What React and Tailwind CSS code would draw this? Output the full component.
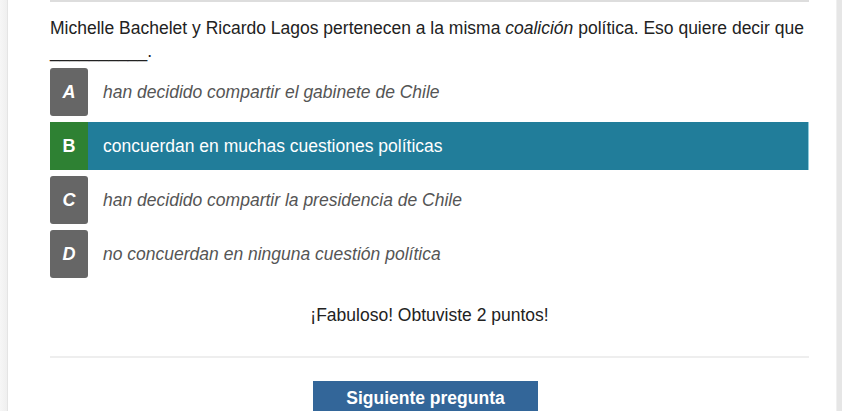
import React from "react"

const options = [
  { letter: "A", text: "han decidido compartir el gabinete de Chile" },
  { letter: "B", text: "concuerdan en muchas cuestiones políticas", selected: true },
  { letter: "C", text: "han decidido compartir la presidencia de Chile" },
  { letter: "D", text: "no concuerdan en ninguna cuestión política" },
]

const Option = ({ letter, text, selected }) => {
  if (selected) {
    return (
      <div className="flex h-[48px] items-center bg-[#217d9a] border-r border-[#8fcbdc]">
        <div className="flex h-full w-[38px] items-center justify-center bg-[#2e8133] text-[18px] font-bold text-white">
          {letter}
        </div>
        <div className="pl-[15px] text-white">{text}</div>
      </div>
    )
  }
  return (
    <div className="flex h-[48px] items-center">
      <div className="flex h-full w-[38px] items-center justify-center rounded-[3px] bg-[#666666] text-[18px] font-bold italic text-white">
        {letter}
      </div>
      <div className="pl-[15px] italic text-[#555555]">{text}</div>
    </div>
  )
}

export default function App() {
  return (
    <div className="flex h-[411px] w-[842px] overflow-hidden bg-white font-['Liberation_Sans',Arial,sans-serif] text-[17.5px] text-[#333333]">
      <div className="w-[8px] shrink-0 border-r border-[#e4e4e4] bg-gradient-to-r from-[#f6f6f6] to-[#efefef]" />
      <div className="flex-1 pl-[42px] pr-[27px]">
        <div className="border-t-2 border-[#dddddd] pt-[15px]">
          <p className="leading-[23px] text-[#222222]">
            Michelle Bachelet y Ricardo Lagos pertenecen a la misma <em>coalición</em> política. Eso quiere decir que __________.
          </p>
          <div className="mt-[5px] flex flex-col gap-[6px]">
            {options.map(o => (
              <Option key={o.letter} {...o} />
            ))}
          </div>
          <p className="mt-[24px] text-center text-[#222222]">¡Fabuloso! Obtuviste 2 puntos!</p>
          <hr className="mt-[28px] border-t-2 border-[#eeeeee]" />
          <div className="mt-[23px] flex justify-center">
            <button className="ml-[-8px] h-[34px] w-[225px] bg-[#336699] font-bold text-white">
              Siguiente pregunta
            </button>
          </div>
        </div>
      </div>
      <div className="w-[6px] shrink-0 border-l border-[#f0f0f0] bg-[#e6e6e6]" />
    </div>
  )
}
